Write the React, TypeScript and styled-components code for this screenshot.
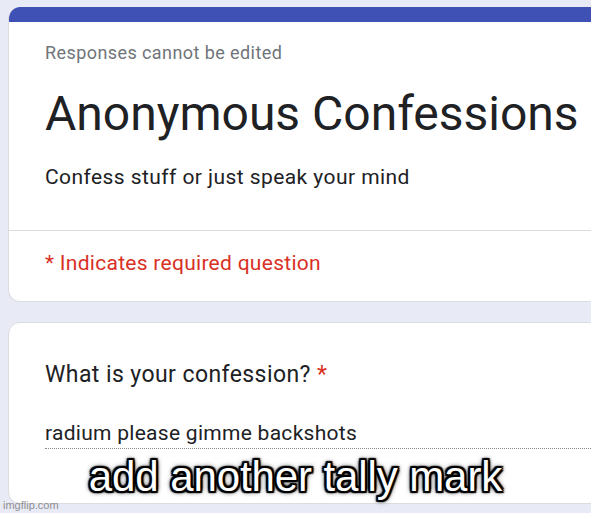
import React from 'react'
import styled, { createGlobalStyle } from 'styled-components'

const GlobalStyle = createGlobalStyle`
  html, body {
    margin: 0;
    padding: 0;
    background: #e8eaf6;
  }
  body {
    font-family: Roboto, "Noto Sans", Arial, sans-serif;
    color: #202124;
  }
`

const Page = styled.div`
  position: relative;
  width: 591px;
  height: 513px;
  overflow: hidden;
  padding: 7px 0 0 8px;
  box-sizing: border-box;
  display: flex;
  flex-direction: column;
  gap: 20px;
  background: #e8eaf6;
`

const Card = styled.div<{ $top?: boolean }>`
  width: 640px;
  background: #fff;
  border: 1px solid #dadce0;
  border-top: ${p => (p.$top ? 'none' : '1px solid #dadce0')};
  border-radius: 12px;
  overflow: hidden;
  box-sizing: border-box;
  flex-shrink: 0;
`

const TopBar = styled.div`
  height: 15px;
  background: #3f51b5;
`

const Section = styled.div<{ $pt: number; $pb: number; $divider?: boolean }>`
  padding: ${p => p.$pt}px 0 ${p => p.$pb}px 36px;
  border-bottom: ${p => (p.$divider ? '1px solid #dadce0' : 'none')};
`

const Notice = styled.div`
  font-size: 18px;
  line-height: 24px;
  letter-spacing: 0.42px;
  color: #70757a;
`

const Title = styled.h1`
  margin: 21px 0 0;
  font-size: 48px;
  line-height: 56px;
  font-weight: 400;
  color: #202124;
  white-space: nowrap;
`

const Description = styled.div`
  margin-top: 20.5px;
  font-size: 21px;
  line-height: 28px;
  letter-spacing: 0.43px;
  color: #202124;
`

const Required = styled.div`
  font-size: 21px;
  line-height: 28px;
  letter-spacing: 0.28px;
  color: #d93025;
`

const Question = styled.div`
  font-size: 23px;
  line-height: 30px;
  letter-spacing: 0.42px;
  color: #202124;
`

const Star = styled.span`
  color: #d93025;
`

const Answer = styled.div`
  margin-top: 30px;
  width: 560px;
  font-size: 21px;
  line-height: 26px;
  letter-spacing: 0.28px;
  padding-bottom: 2px;
  color: #202124;
  border-bottom: 1px dotted #8a8a8a;
`

const Caption = styled.div`
  position: absolute;
  left: 0;
  right: 0;
  top: 454px;
  text-align: center;
  font-family: "Liberation Sans", Arial, sans-serif;
  font-size: 42px;
  line-height: 46px;
  color: #fff;
  letter-spacing: -0.1px;
  text-shadow:
    2px 0 1px #000, -2px 0 1px #000, 0 2px 1px #000, 0 -2px 1px #000,
    2px 2px 1px #000, -2px -2px 1px #000, 2px -2px 1px #000, -2px 2px 1px #000,
    0 0 5px #000, 0 0 6px rgba(0, 0, 0, 0.7);
`

const Watermark = styled.div`
  position: absolute;
  left: 3px;
  bottom: 1px;
  font-family: "Liberation Sans", Arial, sans-serif;
  font-size: 11px;
  line-height: 14px;
  color: #8f8f8f;
`

export default function App() {
  return (
    <>
      <GlobalStyle />
      <Page>
        <Card $top>
          <TopBar />
          <Section $pt={19} $pb={39} $divider>
            <Notice>Responses cannot be edited</Notice>
            <Title>Anonymous Confessions</Title>
            <Description>Confess stuff or just speak your mind</Description>
          </Section>
          <Section $pt={18} $pb={24}>
            <Required>* Indicates required question</Required>
          </Section>
        </Card>
        <Card>
          <Section $pt={37} $pb={54}>
            <Question>
              What is your confession? <Star>*</Star>
            </Question>
            <Answer>radium please gimme backshots</Answer>
          </Section>
        </Card>
        <Caption>add another tally mark</Caption>
        <Watermark>imgflip.com</Watermark>
      </Page>
    </>
  )
}
